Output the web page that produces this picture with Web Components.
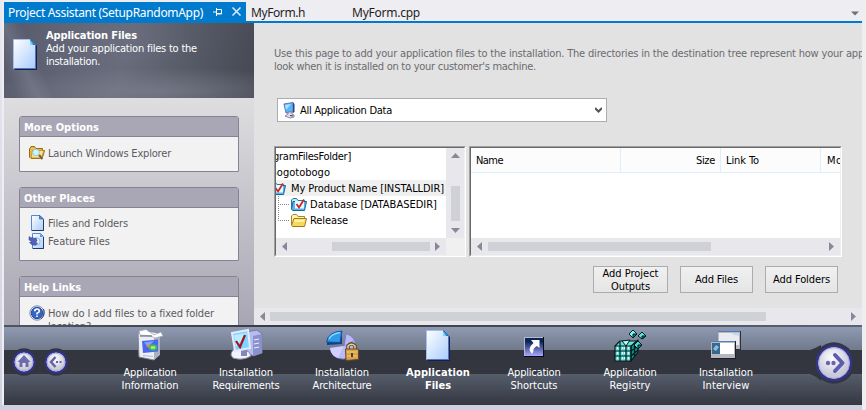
<!DOCTYPE html>
<html lang="en"><head><meta charset="utf-8"><title>Project Assistant</title>
<style>
body{margin:0;width:866px;height:410px;overflow:hidden;background:#eeeef2}
</style></head><body>
<assistant-window></assistant-window>
<script>
const fits=[];
function define(name,html,init){
  customElements.define(name,class extends HTMLElement{
    connectedCallback(){
      if(this.shadowRoot)return;
      this.attachShadow({mode:'open'}).innerHTML=typeof html==='function'?html(this):html;
      if(init)init(this);
    }
  });
}
// One line of text, tracked to occupy the width in its w attribute.
define('fit-text','<style>:host{display:block;width:max-content;white-space:pre;line-height:13px}span{display:inline-block}</style><span><slot></slot></span>',el=>fits.push(el));

const page=id=>`<linearGradient id="${id}" x1="0" y1="0" x2="1" y2="1"><stop stop-color="#fff"/><stop offset="1" stop-color="#a9ccfb"/></linearGradient>`;
const icons={
page:[24,31,`<defs>${page('p')}</defs><path d="M2 1.500H18.500L24 7V31H2z" fill="#14204e"/><path d="M.5.5H17.500L22.500 5.500V29.500H.5z" fill="url(#p)" stroke="#a9bdf0"/><path d="M22.500 6V29.500H1" fill="none" stroke="#5672c0"/><path d="M17.500.5L22.500 5.500H17.500z" fill="#209ce8" stroke="#244b9c" stroke-width=".7"/><path d="M17 1V6L20 6z" fill="#7cd9ff"/>`],
file:[16,16,`<defs>${page('p')}</defs><path d="M2.500.5H11L14.500 4V15.500H2.500z" fill="url(#p)" stroke="#5685df"/><path d="M14.500 4.500V15.500H3" fill="none" stroke="#273c63"/><path d="M10.500.5V4H14z" fill="#3e9ff0" stroke="#244b8a" stroke-width=".6"/>`],
feature:[16,16,`<defs>${page('p')}</defs><path d="M3.500.5H11.500L14.500 3.500V15.500H3.500z" fill="url(#p)" stroke="#5685df"/><path d="M14.500 4V15.500H4" fill="none" stroke="#273c63"/><path d="M11 .5V4h3z" fill="#3e9ff0"/><circle cx="7.500" cy="8.500" r="3.600" fill="#dff3ff" stroke="#8fb2e0"/><path d="M0 3.500L2 5 3.500 4 4.500 5.500 7 5 8 8 6 9.500 8.500 10 7 12Q3 13 .5 9.500L3 8.500 0 7z" fill="#5361bc" stroke="#303d8f" stroke-width=".5"/>`],
explorer:[16,16,`<path d="M.5 4L2 1.500H5.500L7 3.500H13.500V5.500H15.500L14 11 12 13.500H2L.5 12z" fill="#edbc43" stroke="#94681a"/><path d="M3.500 5.500H15L12.500 13H2z" fill="#ffe08a" stroke="#b88425" stroke-width=".8"/><circle cx="7" cy="7.500" r="3.300" fill="#c6f4ff" stroke="#9ccbd6"/><path d="M10 10L13.500 14" stroke="#78643a" stroke-width="2"/>`],
help:[16,16,`<circle cx="8" cy="8" r="7.200" fill="#eee" stroke="#7f8cae"/><circle cx="8" cy="8" r="5.700" fill="#3366c4" stroke="#1e4da6"/><path d="M5.700 6.300Q5.700 4 8 4T10.300 6.200Q10.300 7.300 8 8.300V9.500M8 10.500V12" fill="none" stroke="#fff" stroke-width="1.600"/><path d="M14.500 4Q16.500 9 12 14" fill="none" stroke="#293f6b"/>`],
computer:[12,16,`<path d="M1 2L10 .5V10L3 11z" fill="#57b6f7" stroke="#6672bd"/><path d="M2 3L8 2 3 8z" fill="#a5e6ff"/><path d="M10 .5L11.500 2V10L10 11z" fill="#34407b"/><path d="M5 10H9V12L11 13V15L7 16 2 14 5 12z" fill="#dadbe9" stroke="#72719b" stroke-width=".8"/><path d="M7 13.500L10 14" stroke="#303363"/>`],
folder:[16,13,`<path d="M.5 11V2L2 .5H5.500L7 2.500H13.500V5" fill="#fff4ae" stroke="#a78526"/><path d="M3 4.500H15.500L13.500 12.500H1.500L.5 11z" fill="#f7d85d" stroke="#a17b1d"/><path d="M4 5.500H14L13 8H3z" fill="#fff2a1"/>`],
check:[16,13,`<path d="M.5 11V2L2 .5H5.500L7 2.500H13.500V5" fill="#bde8fc" stroke="#2675ab"/><path d="M2 3.500H15.500L13.500 12.500H1.500L.5 11z" fill="#56b8ed" stroke="#17649e"/><path d="M4 3H13V10.500H4z" fill="#e8faff"/><path d="M5.500 6L8 9.500 13 1.500" fill="none" stroke="#c92725" stroke-width="1.800"/>`],
box:[26,32,`<path d="M1 4L9 2 24 4 21 8V27L17 31 2 28z" fill="#eceef4" stroke="#7f8798"/><path d="M17 9L23 7V26L17 31z" fill="#acb0c2"/><path d="M2 2L9 .5 17 6 24 3 26 7 18 9 14 7 3 6z" fill="#fff" stroke="#9ca3b1" stroke-width=".7"/><path d="M3 7H15" stroke="#555c72"/><path d="M5 12L21 10.500V22.500L6 24z" fill="#4a68ef"/><path d="M7 13.500L17 12 11 18z" fill="#86a2ff"/><path d="M9 17L13 15 12 19z" fill="#ed8f22"/><ellipse cx="16" cy="18.500" rx="4.200" ry="3" fill="#39c65e"/><path d="M14 18.500H18" stroke="#dff052" stroke-width="2"/><path d="M6 26.500L16 27.500" stroke="#b9bdcc"/>`],
req:[33,32,`<path d="M16 3L27 1 32 5V24L23 27 17 23z" fill="#b6bced" stroke="#767ba6"/><path d="M23 7L32 5V24L23 27z" fill="#8a91cc"/><path d="M24 11L29 10M24 15L29 14M24 19L29 18" stroke="#f0f1ff"/><path d="M1 26Q1 20 9 19L19 23 21 27Q13 32 3 29z" fill="#f1f2fa" stroke="#9093ac"/><path d="M11 19H17V27H11z" fill="#8488b8"/><path d="M2 4L18 1 20 19 5 22z" fill="#7dd6ff" stroke="#e4e9fd" stroke-width="2"/><path d="M4 6L17 4 6 18z" fill="#b8edff"/><path d="M6 12L10 18 15 6" fill="none" stroke="#a51120" stroke-width="2.200"/>`],
arch:[33,31,`<path d="M18 16L20 3.500A13 13 0 1 1 4 18z" fill="#b9baf7" stroke="#777bc0"/><path d="M4 18L18 16 12 28Q5 26 4 18z" fill="#cfd0ff"/><path d="M18 16L29 10" stroke="#9295dd"/><path d="M16 3V14L1 15V12z" fill="#123f86"/><path d="M16 1Q2 2 .5 12L14 12.500z" fill="#2f9be8" stroke="#114f9f"/><path d="M14 2.500Q5 4 3 9" fill="none" stroke="#8bd2ff" stroke-width="1.500"/><path d="M22 20V16Q25.500 11.500 29 16V20" fill="none" stroke="#5b4727" stroke-width="3.600"/><path d="M22 20V16Q25.500 12.500 29 16V20" fill="none" stroke="#ead594" stroke-width="1.500"/><path d="M19.500 19H32.500V29.500L20 30.500z" fill="#d6a250" stroke="#684820"/><path d="M21 22H31M21 26H31" stroke="#f6cf76"/><path d="M26 23V27" stroke="#563d20" stroke-width="2"/>`],
shortcut:[20,20,`<defs><linearGradient id="g" x2="0" y2="1"><stop offset=".2" stop-color="#082558"/><stop offset="1" stop-color="#aaaaff"/></linearGradient></defs><path d="M0 0H20V20H0z" fill="#090c18"/><path d="M0 0H19V19H0z" fill="#b8bacb"/><path d="M1 1H19V19H1z" fill="url(#g)"/><path d="M7 3H15.500V11L13 9Q8.500 11.500 9.500 14L8 17Q2.500 12 9.500 6z" fill="#fff"/>`],
registry:[32,31,`<g stroke="#061b1d" stroke-width="1.200" stroke-linejoin="round"><path d="M1 16L6 11H22L17 31H1z" fill="#68e2dc"/><path d="M17 16L24 10V22L17 31z" fill="#118a8b"/><path d="M1 16H17M1 21H17M1 26H17M6 12V31M12 12V31M17 16V31M20.500 13V27M17 21L24 16M17 26L24 20"/></g><g stroke="#061b1d"><path d="M19 0L23 4 19 8 15 4z" fill="#77fff7"/><path d="M28 2L32 6 28 9 24 6z" fill="#5de1d8"/><path d="M24 11L28 15 24 19 20 15z" fill="#4bd8cf"/><path d="M8 11L12 16 16 10z" fill="#b6fff8"/><path d="M19 4H23L19 8zM28 6H32L28 9zM24 15H28L24 19z" fill="#0a8588"/></g><path d="M3 18H5M8 18H11M14 18H16M3 23H5M8 23H11M14 23H16M3 28H5M8 28H11M14 28H16" stroke="#e8fffc" stroke-width="2" stroke-dasharray="1 1"/>`],
interview:[31,28,`<path d="M7 0H30V19H7z" fill="#29313f"/><path d="M7 1H29V18H7z" fill="#b8bac0"/><path d="M8 2H28V14H8z" fill="#e9ebf0"/><path d="M7 .5H29" stroke="#5975b8"/><path d="M21 2H28V5L23 4z" fill="#c1dafb"/><path d="M0 10H25V28H0z" fill="#17202d"/><path d="M0 11H24V27H0z" fill="#b7b7bd"/><path d="M1 12H23V23H1z" fill="#fff"/><path d="M1 12H9V23H1z" fill="#356991"/><path d="M2 18L5 14 8 16 5 20z" fill="#8dbcd9"/><path d="M0 10.500H24" stroke="#587dc4"/>`],
};
define('ui-icon',el=>{const [w,h,s]=icons[el.getAttribute('name')];return `<style>:host{display:block;flex:none;width:${w}px;height:${h}px}svg{display:block;overflow:visible}</style><svg width="${w}" height="${h}" viewBox="0 0 ${w} ${h}">${s}</svg>`});

define('tab-strip',`<style>
:host{display:flex;height:23px;margin-left:4px;width:858px;box-sizing:border-box;border-bottom:2px solid #007acc;font:12px "Noto Sans","Open Sans",sans-serif;color:#1e1e1e;align-items:flex-start;background:#eeeef2}
.active{display:flex;align-items:center;width:242px;height:19px;margin-top:2px;padding-left:4px;box-sizing:border-box;background:#007acc;color:#fff}
.p{margin-left:10px}.c{margin-left:10px}fit-text{line-height:17px}.t{margin-top:4px}.a{margin:11px 3px 0 auto}svg{display:block}</style>
<div class="active"><fit-text style="padding-top:2px" w="195">Project Assistant (SetupRandomApp)</fit-text><svg class="p" width="9" height="8" fill="none" stroke="#fff"><path d="M0 4H3M3.500 0V8M4 1.500H8.500V6H4M4 5.500H8.500"/></svg><svg class="c" width="9" height="9" stroke="#dcecff" stroke-width="1.500"><path d="M.5.5L8.500 8.500M8.500.5L.5 8.500"/></svg></div>
<fit-text class="t" style="margin-left:5px" w="54">MyForm.h</fit-text><fit-text class="t" style="margin-left:47px" w="68">MyForm.cpp</fit-text><svg class="a" width="8" height="5"><path d="M0 .5H8L4 4.500z" fill="#717171"/></svg>`);

define('hero-banner',`<style>:host{display:flex;flex:none;height:75px;box-sizing:border-box;padding:5px 0 0 9px;color:#fff;background:radial-gradient(ellipse 170px 24px at 155px 68px,#8b8f9d80,transparent),radial-gradient(ellipse 85px 42px at 105px 18px,#71758866,transparent),linear-gradient(65deg,transparent 5%,#858a9b66 12%,transparent 18%),linear-gradient(105deg,#565a6b,#666a79 48%,#454852)}
ui-icon{margin-top:11px;margin-right:9px}</style><ui-icon name="page"></ui-icon><div style="padding-top:1px"><fit-text style="font-weight:bold" w="91">Application Files</fit-text><fit-text w="151">Add your application files to the</fit-text><fit-text w="54">installation.</fit-text></div>`);

define('task-card',el=>`<style>:host{display:block;box-sizing:border-box;width:220px;flex:none;border:1px solid #858391;border-radius:3px 3px 0 0;background:#f2f2f2;color:#5d5b64}
header{height:20px;box-sizing:border-box;border-bottom:1px solid #858391;background:#a9a7b5;color:#fff;font-weight:bold;padding:4px 0 0 4px}
main{padding:7px 0 0 9px;display:grid;gap:2px}</style><header><fit-text w="${el.getAttribute('w')}">${el.getAttribute('title')}</fit-text></header><main><slot></slot></main>`);
define('task-link',el=>`<style>:host{display:flex;gap:3px;align-items:flex-start}div{padding-top:2px}</style><ui-icon name="${el.getAttribute('icon')}"></ui-icon><div><slot></slot></div>`);
define('side-panel',`<style>:host{display:flex;flex-direction:column;width:250px;height:302px;overflow:hidden;background:linear-gradient(#dedee0 75px,#a8a6b3)}
.cards{display:flex;flex-direction:column;gap:15px;margin:18px 0 0 15px}task-card{height:74px}</style><hero-banner></hero-banner><div class="cards">
<task-card title="More Options" w="75" style="height:56px"><task-link icon="explorer" style="margin-top:1px"><fit-text w="123">Launch Windows Explorer</fit-text></task-link></task-card>
<task-card title="Other Places" w="71"><task-link icon="file"><fit-text w="80">Files and Folders</fit-text></task-link><task-link icon="feature"><fit-text w="62">Feature Files</fit-text></task-link></task-card>
<task-card title="Help Links" w="57"><task-link icon="help" style="margin-top:1px"><fit-text w="166">How do I add files to a fixed folder</fit-text><fit-text w="43">location?</fit-text></task-link></task-card></div>`);

// Scroll bar: start and size place the thumb after the leading arrow.
define('scroll-bar',el=>{const v=el.hasAttribute('vertical'),g=n=>el.getAttribute(n);return `<style>:host{display:flex;flex-direction:${v?'column':'row'};box-sizing:border-box;background:#e8e8ec;align-items:center;${v?'width:18px;padding:5px 0':'height:17px;padding:0 6px'}}
svg{display:block;flex:none}i{background:#d0d1d6;flex:none;${v?`width:9px;height:${g('size')}px;margin-top:${g('start')}px`:`height:9px;width:${g('size')}px;margin-left:${g('start')}px`}}.e{${v?'margin-top:auto':'margin-left:auto'}}</style>
${v?'<svg width="9" height="5"><path d="M0 5L4.500 0 9 5z" fill="#868999"/></svg><i></i><svg class="e" width="9" height="5"><path d="M0 0H9L4.500 5z" fill="#868999"/></svg>':'<svg width="5" height="9"><path d="M5 0V9L0 4.500z" fill="#868999"/></svg><i></i><svg class="e" width="5" height="9"><path d="M0 0V9L5 4.500z" fill="#868999"/></svg>'}`});

define('inset-pane',`<style>:host{display:flex;box-sizing:border-box;height:111px;border:1px solid;border-color:#a0a0a0 #fff #fff #a0a0a0;background:#fff}div{flex:1;min-width:0;display:flex;flex-direction:column;overflow:hidden;border:1px solid;border-color:#696969 #f0f0f0 #f0f0f0 #696969;background:#f0f0f0}</style><div><slot></slot></div>`);

define('folder-tree',`<style>:host{display:flex;height:90px;overflow:hidden;color:#000;background:#fff}.rows{flex:1;min-width:0;overflow:hidden}.r{display:flex;align-items:center;height:16px}.s{background:#f0f0f0}.l{width:12px;height:16px;margin-left:2px;margin-right:1px;display:flex;flex:none}ui-icon{margin-right:3px}svg{flex:none}</style>
<div class="rows"><div class="r" style="margin-left:-3px"><fit-text w="78">gramFilesFolder]</fit-text></div><div class="r" style="margin-left:-6px"><fit-text w="60">Bogotobogo</fit-text></div>
<div class="r s"><ui-icon name="check" style="margin-left:-6px;margin-right:5px"></ui-icon><fit-text w="153">My Product Name [INSTALLDIR]</fit-text></div>
<div class="r"><svg class="l" viewBox="0 0 12 16" fill="none" stroke="#888" stroke-dasharray="1 1"><path d="M.5 0V16M2 8.500H12"/></svg><ui-icon name="check"></ui-icon><fit-text w="127">Database [DATABASEDIR]</fit-text></div>
<div class="r"><svg class="l" viewBox="0 0 12 16" fill="none" stroke="#888" stroke-dasharray="1 1"><path d="M.5 0V9M2 8.500H12"/></svg><ui-icon name="folder"></ui-icon><fit-text w="38">Release</fit-text></div></div>
<scroll-bar vertical start="28" size="35"></scroll-bar>`);

define('file-list',`<style>:host{display:block;height:90px;color:#000;background:#fff}.h{display:flex;height:24px;border-bottom:1px solid #e0edfb;background:#fcfcfc}.h div{flex:none;box-sizing:border-box;border-right:1px solid #e0edfb;padding:6px 5px 0}</style><div class="h"><div style="width:150px"><fit-text w="27">Name</fit-text></div><div style="width:100px;display:flex;justify-content:flex-end"><fit-text w="19">Size</fit-text></div><div style="width:100px"><fit-text w="33">Link To</fit-text></div><div style="width:100px;border:0;padding-left:6px"><fit-text w="45">Modified</fit-text></div></div>`);

define('push-button',`<style>:host{display:flex;flex-direction:column;align-items:center;justify-content:center;box-sizing:border-box;width:73px;height:27px;border:1px solid #acacac;background:linear-gradient(#f0f0f0,#e5e5e5);color:#000}</style><slot></slot>`);
define('combo-box',`<style>:host{display:flex;align-items:center;box-sizing:border-box;width:330px;height:24px;border:1px solid #abadb3;background:#fff;color:#000;padding:0 4px 0 5px}ui-icon{margin-right:5px}svg{margin-left:auto}</style><ui-icon name="computer"></ui-icon><slot></slot><svg width="7" height="6" fill="none" stroke="#555" stroke-width="2"><path d="M0 1L3.500 4.500 7 1"/></svg>`);

define('work-area',`<style>:host{display:flex;flex-direction:column;width:608px;height:302px;overflow:hidden;background:#e2e2e2;color:#6b6a70}
.i{margin:24px 0 0 20px}combo-box{margin:25px 0 0 23px}.panes{display:flex;margin:24px 0 0 20px}.tree{width:192px;flex:none}.list{width:373px;margin-left:3px;flex:none}
.b{display:flex;gap:12px;margin:9px 24px 0 auto}.end{margin-top:auto}</style>
<div class="i"><fit-text w="590">Use this page to add your application files to the installation. The directories in the destination tree represent how your app</fit-text><fit-text w="262">look when it is installed on to your customer's machine.</fit-text></div>
<combo-box><fit-text w="92">All Application Data</fit-text></combo-box>
<div class="panes"><inset-pane class="tree"><folder-tree></folder-tree><scroll-bar start="45" size="98" style="width:170px"></scroll-bar></inset-pane><inset-pane class="list"><file-list></file-list><scroll-bar start="6" size="223"></scroll-bar></inset-pane></div>
<div class="b"><push-button style="width:75px"><fit-text w="56">Add Project</fit-text><fit-text w="39">Outputs</fit-text></push-button><push-button><fit-text w="43">Add Files</fit-text></push-button><push-button><fit-text w="57">Add Folders</fit-text></push-button></div>
<scroll-bar class="end" start="5" size="496"></scroll-bar>`);

define('nav-orb',el=>{const k=el.getAttribute('kind'),big=k==='next',s=big?42:28,c=s/2,r=big?17:10.500;
const g={home:'<path d="M14 7L20.500 14H18.500V19H15.500V15H12.500V19H9.500V14H7.500z" fill="#6d6dac"/>',back:'<path d="M13.500 9L9 14 13.500 19" fill="none" stroke="#6464a8" stroke-width="2.500"/><path d="M14 14H16M17.500 14H19.500" stroke="#6464a8" stroke-width="2"/>',next:'<path d="M22 13L29.500 21 22 29" fill="none" stroke="#5d5db0" stroke-width="4" stroke-linecap="round" stroke-linejoin="round"/><circle cx="15" cy="21" r="2.200" fill="#6666b0"/><circle cx="20.500" cy="21" r="2.200" fill="#6666b0"/>'}[k];
return `<style>:host{display:block;width:${s}px;height:${s}px}svg{display:block;overflow:visible}</style><svg width="${s}" height="${s}"><defs><radialGradient id="o" cx=".45" cy=".35"><stop stop-color="#fff"/><stop offset="1" stop-color="#c9c9da"/></radialGradient></defs>${big?'<path d="M-3 8Q3 6 8 3V39Q3 34-3 32z" fill="#33363f"/>':''}<circle cx="${c}" cy="${c}" r="${c-.3}" fill="#33363f"/><circle cx="${c}" cy="${c}" r="${r}" fill="url(#o)" stroke="#33338c" stroke-width="${big?2.600:2}"/><circle cx="${c}" cy="${c}" r="${r-1.700}" fill="none" stroke="#aeaede" stroke-width="1"/>${g}</svg>`});

define('step-item',el=>`<style>:host{display:flex;flex-direction:column;align-items:center;color:#fff}.i{height:32px;display:grid;place-items:center;margin-bottom:5px}ui-icon[name=shortcut]{margin-top:4px}</style><div class="i"><ui-icon name="${el.getAttribute('icon')}"></ui-icon></div><slot></slot>`);
const steps=[['box','Application',53,'Information',57],['req','Installation',54,'Requirements',67],['arch','Installation',54,'Architecture',59],['page','Application',64,'Files',26,1],['shortcut','Application',53,'Shortcuts',47],['registry','Application',53,'Registry',41],['interview','Installation',54,'Interview',47]];
define('step-bar',`<style>:host{display:grid;grid-template-columns:98px repeat(7,96px) 88px;width:858px;height:80px;box-sizing:border-box;background:linear-gradient(90deg,#50565f,#353941 35%,#5b6373) 0 0/100% 2px no-repeat,linear-gradient(#8f9ab2,#717a8b) 0 2px/100% 23px no-repeat,linear-gradient(#33363f,#33363f) 0 25px/100% 24px no-repeat,linear-gradient(#565d6b,#343741) 0 49px/100% 31px no-repeat;padding-top:2px}
step-item{padding-top:2px;height:76px;box-sizing:border-box}.n{display:flex;gap:4px;padding:21px 0 0 6px}.e{padding:15px 0 0 39px}</style><div class="n"><nav-orb kind="home"></nav-orb><nav-orb kind="back"></nav-orb></div>
${steps.map(s=>`<step-item icon="${s[0]}"${s[5]?' style="font-weight:bold"':''}><fit-text w="${s[2]}">${s[1]}</fit-text><fit-text w="${s[4]}">${s[3]}</fit-text></step-item>`).join('')}
<div class="e"><nav-orb kind="next"></nav-orb></div>`);

define('assistant-window',`<style>:host{display:block;height:410px;font:11px "DejaVu Sans Condensed","DejaVu Sans",sans-serif;background:linear-gradient(#d0cfe0,#d0cfe0) 0 405px/862px 5px no-repeat,linear-gradient(#e9e9f2,#d0cfe0) 0 0/2px 100% no-repeat,#eeeef2}.m{display:flex;margin-left:4px}step-bar{margin-left:4px}</style>
<tab-strip></tab-strip><div class="m"><side-panel></side-panel><work-area></work-area></div><step-bar></step-bar>`);

for(const el of fits){const s=el.shadowRoot.querySelector('span'),n=el.textContent.length,d=+el.getAttribute('w')-s.getBoundingClientRect().width;s.style.letterSpacing=d/n+'px'}
</script></body></html>
